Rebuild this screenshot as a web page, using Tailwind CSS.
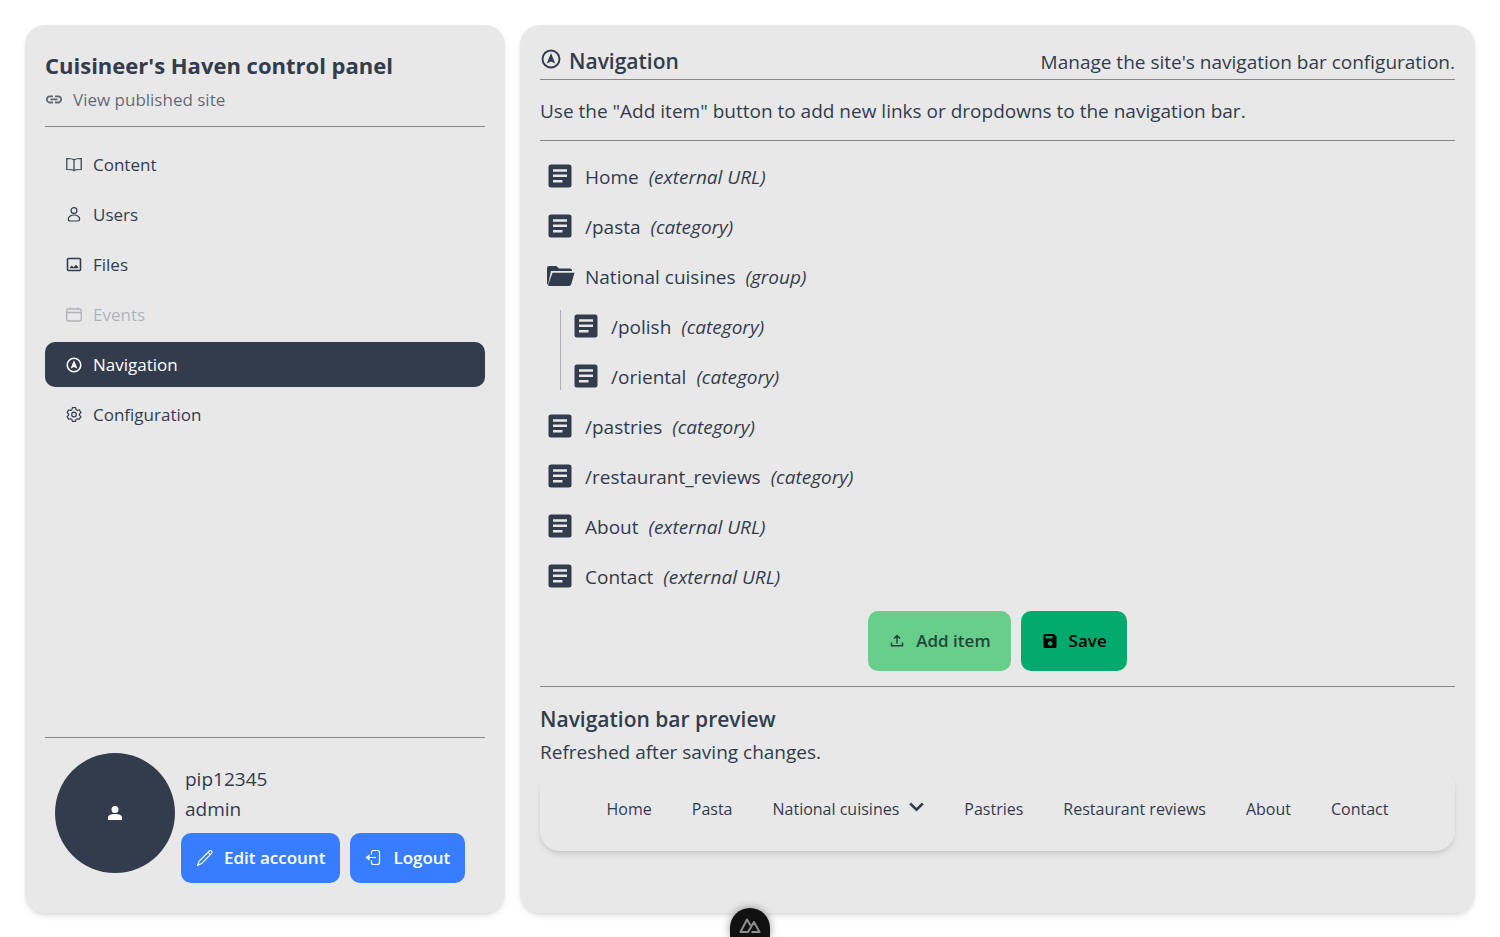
<!DOCTYPE html>
<html lang="en">
<head>
<meta charset="utf-8">
<meta name="viewport" content="width=device-width, initial-scale=1">
<title>Cuisineer's Haven control panel</title>
<script src="https://cdn.jsdelivr.net/npm/@tailwindcss/browser@4"></script>
</head>
<body class="min-h-screen bg-white font-['Open_Sans',sans-serif] text-[19px] leading-[30px] text-[#333c4d]">
<svg class="hidden" aria-hidden="true">
  <symbol id="doc" viewBox="0 0 24 24"><path fill="currentColor" fill-rule="evenodd" d="M3 0.500h18a2.500 2.500 0 0 1 2.500 2.500v18a2.500 2.500 0 0 1-2.500 2.500h-18a2.500 2.500 0 0 1-2.500-2.500v-18a2.500 2.500 0 0 1 2.500-2.500zM5 5.300v2.400h14V5.300zM5 10.600V13h14v-2.400zM5 16v2.400h9.500V16z"/></symbol>
  <symbol id="compass" viewBox="0 0 20 20"><circle cx="10" cy="10" r="8.500" fill="none" stroke="currentColor" stroke-width="1.900"/><path fill="currentColor" d="M10 4l4.200 10.500L10 12.600l-4.200 1.900z"/></symbol>
</svg>
<div class="flex min-h-screen gap-[15px] px-[25px] pt-[25px] pb-6">
  <aside class="flex w-[480px] shrink-0 flex-col rounded-[20px] bg-[#e8e8e8] p-5 shadow-md">
    <h1 class="mt-1 text-[22px] leading-[32px] font-bold">Cuisineer's Haven control panel</h1>
    <a href="#" class="mt-1 flex items-center gap-[10px] text-[17px] text-[#333c4d]/75">
      <svg class="size-[18px]" viewBox="0 0 18 18" fill="none" stroke="currentColor" stroke-width="1.800"><path d="M8 5.300H5a3.100 3.100 0 0 0 0 6.200h3M10 5.300h3a3.100 3.100 0 0 1 0 6.200h-3M5.500 8.400h7"/></svg>
      View published site
    </a>
    <hr class="mt-[11px] border-[#878787]">
    <nav class="mt-[15px] flex flex-col gap-[5px] text-[17px]" aria-label="Sections">
      <a href="#" class="flex h-[45px] items-center gap-[10px] rounded-[10px] px-5">
        <svg class="size-[18px]" viewBox="0 0 18 18" fill="none" stroke="currentColor" stroke-width="1.200"><path d="M9 4.200C8 3 6 2.500 1.800 2.500v11C6 13.500 8 13.500 9 14.700c1-1.200 3-1.200 7.200-1.200v-11C12 2.500 10 3 9 4.200zV14.700"/></svg>Content</a>
      <a href="#" class="flex h-[45px] items-center gap-[10px] rounded-[10px] px-5">
        <svg class="size-[18px]" viewBox="0 0 18 18" fill="none" stroke="currentColor" stroke-width="1.200"><circle cx="9" cy="4.500" r="2.900"/><path d="M9 9c-3.300 0-5.700 2-5.700 4.300 0 1.200.8 1.700 2 1.700h7.400c1.200 0 2-.5 2-1.700C14.700 11 12.300 9 9 9z"/></svg>Users</a>
      <a href="#" class="flex h-[45px] items-center gap-[10px] rounded-[10px] px-5">
        <svg class="size-[18px]" viewBox="0 0 18 18" fill="none" stroke="currentColor" stroke-width="1.600"><rect x="2.500" y="2.500" width="13" height="12" rx="1"/><path fill="currentColor" stroke="none" d="M4.800 12.300v-.8l2-2 1.800 1.800 2.400-2.600 2.200 2.600v1z"/></svg>Files</a>
      <a href="#" aria-disabled="true" class="flex h-[45px] items-center gap-[10px] rounded-[10px] px-5 opacity-30">
        <svg class="size-[18px]" viewBox="0 0 18 18" fill="none" stroke="currentColor" stroke-width="1.300"><rect x="1.700" y="3" width="14.600" height="12" rx="2"/><path d="M1.700 6.500h14.600M5 1.500V3M13 1.500V3"/></svg>Events</a>
      <a href="#" aria-current="page" class="flex h-[45px] items-center gap-[10px] rounded-[10px] bg-[#333c4d] px-5 text-white">
        <svg class="size-[18px] p-px"><use href="#compass"/></svg>Navigation</a>
      <a href="#" class="flex h-[45px] items-center gap-[10px] rounded-[10px] px-5">
        <svg class="size-[18px]" viewBox="0 0 18 18" fill="none" stroke="currentColor" stroke-width="1.200" stroke-linejoin="round"><circle cx="9" cy="8.500" r="2.300"/><path d="M7.400 1.700h3.200l.5 2 1.200.7 2-.6 1.600 2.800-1.500 1.400v1.200l1.500 1.400-1.600 2.700-2-.6-1.200.7-.5 2H7.400l-.5-2-1.200-.7-2 .6-1.600-2.700 1.500-1.400V8L2.100 6.600l1.600-2.800 2 .6 1.200-.7z"/></svg>Configuration</a>
    </nav>
    <footer class="mt-auto border-t border-[#878787] pt-[15px]">
      <div class="flex gap-[6px] pb-[10px] pl-[10px]">
        <div class="flex size-[120px] shrink-0 items-center justify-center rounded-full bg-[#333c4d] text-white">
          <svg class="size-[18px]" viewBox="0 0 18 18" fill="currentColor"><circle cx="9" cy="5.500" r="3.500"/><path d="M2 16v-2.500c0-2.300 2.500-3.500 7-3.500s7 1.200 7 3.500V16z"/></svg>
        </div>
        <div>
          <p class="mt-[11px] ml-1">pip12345</p>
          <p class="ml-1">admin</p>
          <div class="mt-[9px] flex gap-[10px] text-[17px] font-semibold text-white">
            <button class="flex h-[50px] items-center gap-[10px] rounded-[10px] bg-[#387dff] px-[15px]">
              <svg class="size-[18px]" viewBox="0 0 18 18" fill="none" stroke="currentColor" stroke-width="1.100" stroke-linejoin="round"><path d="M1.500 16.500l1.700-4.300L13.300 2q1.200-1 2.300 .1t0 2.300L5.500 14.600zM12 3.300l2.400 2.400"/></svg>Edit account</button>
            <button class="flex h-[50px] items-center gap-[10px] rounded-[10px] bg-[#387dff] px-[15px]">
              <svg class="size-[18px]" viewBox="0 0 18 18" fill="none" stroke="currentColor" stroke-width="1.200"><path d="M6.500 5.500V3.500q0-2 2-2h4q2 0 2 2v10q0 2-2 2h-4q-2 0-2-2v-2M11 8.500H2M4 6.500L1.500 8.500l2.500 2z"/></svg>Logout</button>
          </div>
        </div>
      </div>
    </footer>
  </aside>
  <main class="min-w-0 flex-1 rounded-[20px] bg-[#e8e8e8] p-5 shadow-md">
    <header class="flex items-start justify-between border-b border-[#878787]">
      <h2 class="flex items-center gap-[7px] text-[21px] leading-[32px] font-semibold"><svg class="mb-1 size-[22px] p-px"><use href="#compass"/></svg>Navigation</h2>
      <p class="leading-[34px]">Manage the site's navigation bar configuration.</p>
    </header>
    <p class="border-b border-[#878787] pt-4 pb-[14px]">Use the "Add item" button to add new links or dropdowns to the navigation bar.</p>
    <ul class="mt-[11px]">
      <li class="flex h-[50px] items-center gap-[10px] pl-2"><svg class="mr-[3px] mb-[2px] size-6"><use href="#doc"/></svg>Home <i>(external URL)</i></li>
      <li class="flex h-[50px] items-center gap-[10px] pl-2"><svg class="mr-[3px] mb-[2px] size-6"><use href="#doc"/></svg>/pasta <i>(category)</i></li>
      <li>
        <div class="flex h-[50px] items-center gap-[10px] pl-[7px]"><svg class="mb-[2px] h-6 w-7" viewBox="0 0 28 24" fill="currentColor"><path d="M2 2h7.500l2.500 2.500h11a2 2 0 0 1 2 2V7H4L1.500 18.500 1 21l-1-1.500V4a2 2 0 0 1 2-2z"/><path d="M5.500 8.800H27.500l-3.200 11.200q-.5 2-2.500 2H2q-.5 0-1-.8z"/></svg>National cuisines <i>(group)</i></div>
        <ul class="relative ml-5 before:absolute before:top-2 before:bottom-3 before:left-0 before:w-px before:bg-[#acb0b7]">
          <li class="flex h-[50px] items-center gap-[10px] pl-[14px]"><svg class="mr-[3px] mb-[2px] size-6"><use href="#doc"/></svg>/polish <i>(category)</i></li>
          <li class="flex h-[50px] items-center gap-[10px] pl-[14px]"><svg class="mr-[3px] mb-[2px] size-6"><use href="#doc"/></svg>/oriental <i>(category)</i></li>
        </ul>
      </li>
      <li class="flex h-[50px] items-center gap-[10px] pl-2"><svg class="mr-[3px] mb-[2px] size-6"><use href="#doc"/></svg>/pastries <i>(category)</i></li>
      <li class="flex h-[50px] items-center gap-[10px] pl-2"><svg class="mr-[3px] mb-[2px] size-6"><use href="#doc"/></svg>/restaurant_reviews <i>(category)</i></li>
      <li class="flex h-[50px] items-center gap-[10px] pl-2"><svg class="mr-[3px] mb-[2px] size-6"><use href="#doc"/></svg>About <i>(external URL)</i></li>
      <li class="flex h-[50px] items-center gap-[10px] pl-2"><svg class="mr-[3px] mb-[2px] size-6"><use href="#doc"/></svg>Contact <i>(external URL)</i></li>
    </ul>
    <div class="mt-[9px] flex justify-center gap-[10px] border-b border-[#878787] pb-[15px] text-[17px] font-semibold">
      <button class="flex h-[60px] items-center gap-[10px] rounded-[10px] bg-[#68ce8b] px-5 text-[#24473a]">
        <svg class="size-[18px]" viewBox="0 0 18 18" fill="none" stroke="currentColor" stroke-width="1.500"><path d="M3.500 10.500v3.300h11v-3.300M9 11.500V4M6 6.500l3-3 3 3"/></svg>Add item</button>
      <button class="flex h-[60px] items-center gap-[10px] rounded-[10px] bg-[#02aa6e] px-5 text-black">
        <svg class="size-[18px]" viewBox="0 0 18 18" fill="currentColor"><path fill-rule="evenodd" d="M4 2h9l2.500 2.500v10q0 1.500-1.500 1.500H4q-1.500 0-1.500-1.500v-11Q2.500 2 4 2zM4.500 4v2.500h7V4zM9.200 9.200a2.300 2.300 0 1 0 .01 0z"/></svg>Save</button>
    </div>
    <h3 class="mt-[17px] mb-[3px] text-[21px] leading-[30px] font-semibold">Navigation bar preview</h3>
    <p>Refreshed after saving changes.</p>
    <nav class="flex h-[84px] items-center justify-center gap-10 rounded-[20px] text-[16px] shadow-md" aria-label="Preview">
      <a href="#">Home</a>
      <a href="#">Pasta</a>
      <a href="#" class="flex items-center gap-[10px]">National cuisines
        <svg class="mb-1 h-4 w-[15px]" viewBox="0 0 15 16" fill="none" stroke="currentColor" stroke-width="2.500"><path d="M1.200 4.500l6.300 6.200 6.300-6.200"/></svg></a>
      <a href="#">Pastries</a>
      <a href="#">Restaurant reviews</a>
      <a href="#">About</a>
      <a href="#">Contact</a>
    </nav>
  </main>
</div>
<button aria-label="Developer tools" class="fixed bottom-0 left-1/2 flex h-[29px] w-10 -translate-x-1/2 items-center justify-center rounded-t-[20px] bg-[#111] pt-[6px] text-[#8e8e8e] shadow-[0_0_8px_#0006]">
  <svg class="h-4 w-[22px]" viewBox="0 0 22 16" fill="none" stroke="currentColor" stroke-width="2" stroke-linejoin="round"><path d="M12.500 14H20.500L15 4l-6 10H1.500L8 1.500l3.500 6"/></svg>
</button>
</body>
</html>
